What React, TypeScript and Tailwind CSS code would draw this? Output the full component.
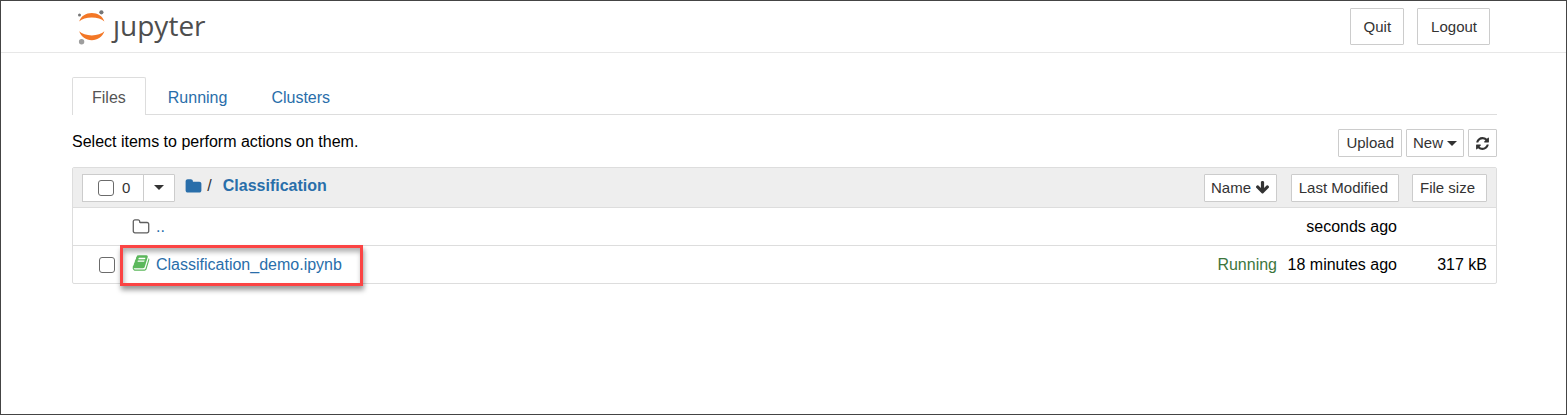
import type { ButtonHTMLAttributes, InputHTMLAttributes, ReactNode } from "react";

const ICONS = {
  folder:
    "M1728 608v704q0 92-66 158t-158 66h-1216q-92 0-158-66t-66-158v-960q0-92 66-158t158-66h320q92 0 158 66t66 158v32h672q92 0 158 66t66 158z",
  folderOutline:
    "M1600 1312v-704q0-40-28-68t-68-28h-704q-40 0-68-28t-28-68v-64q0-40-28-68t-68-28h-320q-40 0-68 28t-28 68v960q0 40 28 68t68 28h1216q40 0 68-28t28-68zm128-704v704q0 92-66 158t-158 66h-1216q-92 0-158-66t-66-158v-960q0-92 66-158t158-66h320q92 0 158 66t66 158v32h672q92 0 158 66t66 158z",
  arrowDown:
    "M1675 832q0 53-37 90l-651 652q-39 37-91 37-53 0-90-37l-651-652q-38-36-38-90 0-53 38-91l74-75q39-37 91-37 53 0 90 37l294 294v-704q0-52 38-90t90-38h128q52 0 90 38t38 90v704l294-294q37-37 90-37 52 0 91 37l75 75q37 39 37 91z",
  refresh:
    "M1639 1056q0 5-1 7-64 268-268 434.5t-478 166.5q-146 0-282.5-55t-243.5-157l-129 129q-19 19-45 19t-45-19-19-45v-448q0-26 19-45t45-19h448q26 0 45 19t19 45-19 45l-137 137q71 66 161 102t187 36q134 0 250-65t186-179q11-17 53-117 8-23 30-23h192q13 0 22.5 9.5t9.5 22.5zm25-800v448q0 26-19 45t-45 19h-448q-26 0-45-19t-19-45 19-45l138-138q-148-137-349-137-134 0-250 65t-186 179q-11 17-53 117-8 23-30 23h-199q-13 0-22.5-9.5t-9.5-22.5v-7q65-268 270-434.5t480-166.5q146 0 284 55.5t245 156.5l130-129q19-19 45-19t45 19 19 45z",
  book:
    "M1703 478q40 57 18 129l-275 906q-19 64-76.5 107.5t-122.5 43.5h-923q-77 0-148.500-53.500t-99.500-131.500q-24-67-2-127 0-4 3-27t4-37q1-8-3-21.500t-3-19.500q2-11 8-21t16.500-23.500 16.500-23.500q23-38 45-91.500t30-91.500q3-10 .5-30t-.5-28q3-11 17-28t17-23q21-36 42-92t25-90q1-9-2.500-32t.5-28q4-13 22-30.500t22-22.500q19-26 42.500-84.500t27.500-96.500q1-8-3-25.500t-2-26.500q2-8 9-18t18-23 17-21q8-12 16.500-30.500t15-35 16-36 19.500-32 26.500-23.500 36-11.500 47.500 5.500l-1 3q38-9 51-9h761q74 0 114 56t18 130l-274 906q-36 119-71.500 153.500t-128.500 34.500h-869q-27 0-38 15-11 16-1 43 24 70 144 70h923q29 0 56-15.500t35-41.500l300-987q7-22 5-57 38 15 59 43zm-1064 2q-4 13 2 22.500t20 9.500h608q13 0 25.500-9.500t16.500-22.500l21-64q4-13-2-22.500t-20-9.500h-608q-13 0-25.500 9.500t-16.500 22.500zm-83 256q-4 13 2 22.500t20 9.500h608q13 0 25.500-9.500t16.500-22.500l21-64q4-13-2-22.500t-20-9.500h-608q-13 0-25.500 9.500t-16.500 22.500z",
};

function Icon({ name, className }: { name: keyof typeof ICONS; className: string }) {
  return (
    <svg viewBox="0 0 1792 1792" fill="currentColor" aria-hidden="true" className={`shrink-0 ${className}`}>
      <path d={ICONS[name]} />
    </svg>
  );
}

function Caret() {
  return (
    <svg viewBox="0 0 10 5" fill="currentColor" aria-hidden="true" className="h-[5px] w-[10px] shrink-0">
      <path d="M0 0h10L5 5z" />
    </svg>
  );
}

function Button({ className, children, ...rest }: ButtonHTMLAttributes<HTMLButtonElement> & { children: ReactNode }) {
  return (
    <button
      type="button"
      className={`inline-flex items-center rounded-[1px] border border-[#ccc] bg-white text-[15px] text-[#333] ${className}`}
      {...rest}
    >
      {children}
    </button>
  );
}

function Checkbox(props: InputHTMLAttributes<HTMLInputElement>) {
  return (
    <input
      type="checkbox"
      className="size-4 shrink-0 appearance-none rounded-[3px] border border-[#6b6b6b] bg-white checked:bg-[#296eaa]"
      {...props}
    />
  );
}

function Logo() {
  return (
    <a href="#" aria-label="jupyter" className="flex h-[51px] items-center gap-[7px]">
      <svg viewBox="0 0 28 36" aria-hidden="true" className="h-9 w-7">
        <path d="M1.2 12.400C3.100 7 8 4 13.800 4s10.700 3 12.600 8.400C23.700 9.900 19 8.500 13.800 8.500S3.900 9.900 1.200 12.400z" fill="#f37726" />
        <path d="M1.200 22.300c2.700 2.500 7.400 4.100 12.600 4.100s9.900-1.600 12.600-4.100c-1.900 5.600-6.800 8.900-12.600 8.900S3.100 27.900 1.200 22.300z" fill="#f37726" />
        <circle cx="23.400" cy="3.300" r="2.100" fill="#767677" />
        <circle cx="1.500" cy="5.900" r="1.500" fill="#767677" />
        <circle cx="3.600" cy="32.700" r="2.700" fill="#9e9e9e" />
      </svg>
      <span className="pb-1 font-['Open_Sans','Noto_Sans',sans-serif] text-[28px] leading-10 font-medium text-[#4e4e4e]">ȷupyter</span>
    </a>
  );
}

export default function App() {
  return (
    <div className="min-h-screen border border-[#444] bg-white font-['Liberation_Sans',Arial,sans-serif] text-base leading-5 text-black">
      <header className="flex items-center justify-between border-b border-[#e7e7e7] pr-19 pl-[77px]">
        <Logo />
        <div className="flex gap-[13px]">
          <Button className="h-[37px] pr-3 pl-[13px]">Quit</Button>
          <Button className="h-[37px] pr-3 pl-[13px]">Logout</Button>
        </div>
      </header>

      <main className="pt-6 pr-[69px] pl-[71px]">
        <nav className="flex border-b border-[#ddd] text-[#296eaa]">
          <a
            href="#files"
            aria-current="page"
            className="-mb-px flex h-[38px] items-center rounded-t-[2px] border border-b-0 border-[#ddd] bg-white px-[19px] pt-[3px] text-[#555]"
          >
            Files
          </a>
          <a href="#running" className="flex items-center px-[22px] pt-1">Running</a>
          <a href="#clusters" className="flex items-center px-[22px] pt-1">Clusters</a>
        </nav>

        <div className="flex items-start justify-between pt-[14px] pb-[10px]">
          <p className="pt-[3px]">Select items to perform actions on them.</p>
          <div className="flex gap-1">
            <Button className="h-7 px-[7px]">Upload</Button>
            <Button className="h-7 gap-1 px-[6px]">
              New <Caret />
            </Button>
            <Button className="h-7 px-[6px]" aria-label="Refresh notebook list">
              <Icon name="refresh" className="size-[15px]" />
            </Button>
          </div>
        </div>

        <div className="rounded-[2px] border border-[#ddd]">
          <table className="w-full table-fixed border-separate border-spacing-0 text-right">
            <colgroup>
              <col />
              <col className="w-20" />
              <col className="w-[122px]" />
              <col className="w-[93px]" />
            </colgroup>
            <thead>
              <tr className="h-10 bg-[#eee] *:border-b *:border-[#ddd]">
                <th className="pl-[9px] font-normal">
                  <div className="flex items-center">
                    <div className="flex items-center">
                      <label className="flex h-7 items-center gap-2 border border-[#ccc] bg-white pr-[13px] pl-[15px] text-[#333]">
                        <Checkbox aria-label="Select all" />
                        <span className="text-[15px]">0</span>
                      </label>
                      <Button className="-ml-px h-7 px-[10px]" aria-label="Select by type">
                        <Caret />
                      </Button>
                    </div>
                    <nav className="flex items-center pb-[3px] pl-[10px]">
                      <a href="#home" aria-label="Home" className="text-[#296eaa]">
                        <Icon name="folder" className="size-[17px]" />
                      </a>
                      <span className="pr-[11px] pl-[5px] text-[#333]">/</span>
                      <a href="#classification" className="font-bold text-[#296eaa]">Classification</a>
                    </nav>
                  </div>
                </th>
                <th className="pr-1 font-normal">
                  <Button className="h-7 gap-1 px-[6px] align-middle">
                    Name <Icon name="arrowDown" className="size-[15px]" />
                  </Button>
                </th>
                <th className="pr-1 font-normal">
                  <Button className="h-7 pr-[10px] pl-[7px] align-middle">Last Modified</Button>
                </th>
                <th className="pr-[9px] font-normal">
                  <Button className="h-7 pr-[11px] pl-[7px] align-middle">File size</Button>
                </th>
              </tr>
            </thead>
            <tbody>
              <tr className="h-[38px] *:border-b *:border-[#ddd]">
                <td>
                  <a href="#up" className="flex items-center gap-[6px] pl-[59px] text-[#296eaa]">
                    <Icon name="folderOutline" className="size-[18px] text-[#5e5e5e]" />
                    ..
                  </a>
                </td>
                <td />
                <td className="pr-[6px]">seconds ago</td>
                <td />
              </tr>
              <tr className="h-[37px]">
                <td>
                  <div className="relative flex items-center pl-[26px]">
                    <Checkbox aria-label="Select Classification_demo.ipynb" />
                    <a href="#notebook" className="flex items-center gap-[6px] pl-[17px] text-[#296eaa]">
                      <Icon name="book" className="mb-1 size-[18px] text-[#5cb85c]" />
                      Classification_demo.ipynb
                    </a>
                    <div className="pointer-events-none absolute -top-[9px] left-[47px] h-[41px] w-[243px] border-[3px] border-[#fb4444] shadow-[1px_4px_5px_rgba(0,0,0,0.4),inset_1px_4px_5px_rgba(0,0,0,0.3)]" />
                  </div>
                </td>
                <td className="pr-1 text-[#3c763d]">Running</td>
                <td className="pr-[6px]">18 minutes ago</td>
                <td className="pr-[9px]">317 kB</td>
              </tr>
            </tbody>
          </table>
        </div>
      </main>
    </div>
  );
}
